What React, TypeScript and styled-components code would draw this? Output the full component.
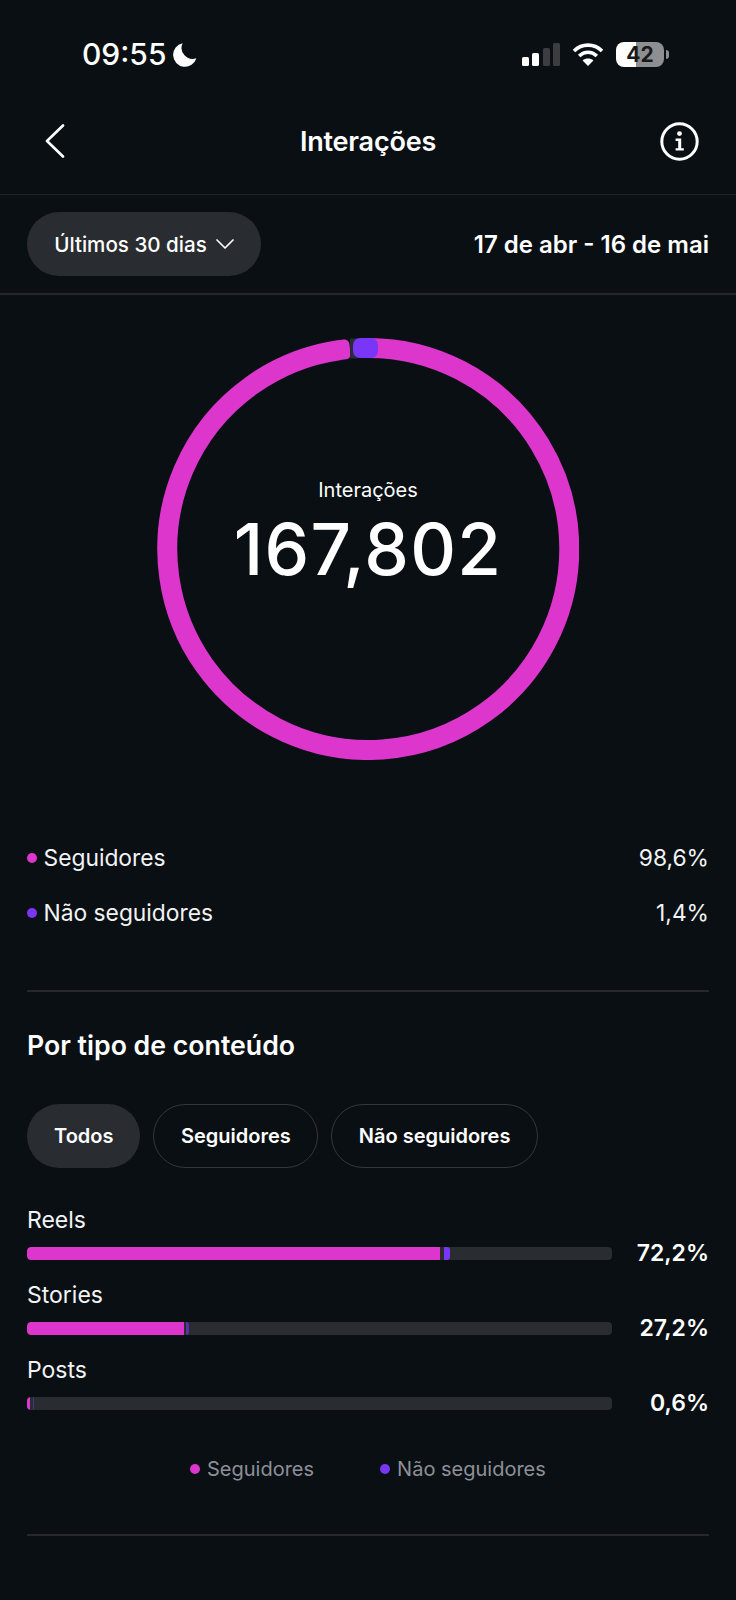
import React from "react";
import styled, { createGlobalStyle } from "styled-components";

const PINK = "#dd36cc";
const PURPLE = "#7a36f6";
const TRACK = "#292c31";
const BG = "#0a0f14";

const Global = createGlobalStyle`
  html, body { margin: 0; padding: 0; background: ${BG}; }
  * { box-sizing: border-box; }
`;

const Page = styled.div`
  width: 736px;
  height: 1600px;
  overflow: hidden;
  background: ${BG};
  color: #fff;
  font-family: Inter, "Liberation Sans", sans-serif;
`;

const StatusBar = styled.div`
  height: 88px;
  padding: 20px 72px 0 82px;
  display: flex;
  align-items: center;
`;
const Time = styled.span`
  font-size: 30px;
  font-weight: 500;
  letter-spacing: 0;
`;
const MoonIcon = styled.svg`
  margin-left: 6px;
  width: 25px;
  height: 25px;
`;
const StatusRight = styled.div`
  margin-left: auto;
  display: flex;
  align-items: center;
  gap: 12px;
`;
const Battery = styled.div`
  position: relative;
  width: 48px;
  height: 25px;
  border-radius: 8px;
  background: linear-gradient(90deg, #fff 42%, #8e8f91 42%);
  color: #17191d;
  font-size: 21px;
  font-weight: 700;
  display: flex;
  align-items: center;
  justify-content: center;
  &::after {
    content: "";
    position: absolute;
    right: -5px;
    top: 8px;
    width: 3px;
    height: 9px;
    border-radius: 0 3px 3px 0;
    background: #8e8f91;
  }
`;

const Header = styled.header`
  height: 107px;
  padding: 0 37px 0 45px;
  border-bottom: 1px solid #1f2227;
  display: flex;
  align-items: center;
`;
const HeaderSide = styled.div<{ $end?: boolean }>`
  flex: 1;
  display: flex;
  justify-content: ${(p) => (p.$end ? "flex-end" : "flex-start")};
`;
const Title = styled.h1`
  margin: 0 0 0 -8px;
  font-size: 27px;
  font-weight: 600;
  letter-spacing: -0.2px;
`;

const FilterRow = styled.div`
  height: 100px;
  padding: 0 27px;
  border-bottom: 2px solid #24272c;
  display: flex;
  align-items: center;
  justify-content: space-between;
`;
const RangePill = styled.div`
  width: 234px;
  height: 64px;
  border-radius: 32px;
  background: ${TRACK};
  display: flex;
  align-items: center;
  justify-content: center;
  gap: 9px;
  font-size: 20.6px;
  font-weight: 500;
`;
const DateRange = styled.span`
  font-size: 24px;
  font-weight: 600;
`;

const RingWrap = styled.div`
  margin: 43px auto 0;
  width: 422px;
  height: 422px;
  display: grid;
  place-items: center;
  > * {
    grid-area: 1 / 1;
  }
`;
const RingCenter = styled.div`
  text-align: center;
  margin-top: -30px;
`;
const RingLabel = styled.div`
  font-size: 20px;
  line-height: 24px;
`;
const RingValue = styled.div`
  font-size: 71px;
  line-height: 84px;
  font-weight: 500;
  letter-spacing: 1.2px;
  margin-top: 5px;
`;

const ShareList = styled.div`
  margin: 70px 27px 0;
  padding-bottom: 50px;
  border-bottom: 2px solid #24272c;
`;
const ShareRow = styled.div`
  height: 55px;
  display: flex;
  align-items: center;
  font-size: 22.8px;
  color: #f2f3f4;
`;
const Dot = styled.span<{ $color: string }>`
  width: 10px;
  height: 10px;
  border-radius: 50%;
  margin-right: 6.5px;
  background: ${(p) => p.$color};
`;
const ShareValue = styled.span`
  margin-left: auto;
`;

const SectionTitle = styled.h2`
  margin: 34px 27px 0;
  font-size: 26.7px;
  line-height: 38px;
  font-weight: 600;
`;
const Chips = styled.div`
  margin: 40px 27px 0;
  display: flex;
  gap: 13px;
`;
const Chip = styled.div<{ $active?: boolean }>`
  height: 64px;
  padding: 0 ${(p) => (p.$active ? "27px" : "26.5px")};
  border-radius: 32px;
  display: flex;
  align-items: center;
  font-size: 20px;
  font-weight: 600;
  background: ${(p) => (p.$active ? TRACK : "transparent")};
  border: ${(p) => (p.$active ? "none" : "1.5px solid #34373d")};
`;

const Rows = styled.div`
  margin: 33px 27px 0;
`;
const ContentRow = styled.div`
  height: 75px;
  display: grid;
  grid-template-columns: 585px 1fr;
  grid-template-rows: 38px 37px;
`;
const RowLabel = styled.div`
  grid-column: 1 / 3;
  font-size: 23px;
  line-height: 38px;
  color: #f2f3f4;
`;
const Track = styled.div`
  height: 13px;
  margin-top: 8px;
  border-radius: 4px;
  background: ${TRACK};
  display: flex;
  overflow: hidden;
`;
const Segment = styled.div<{ $color: string; $width: number; $gap: number; $opacity: number }>`
  width: ${(p) => p.$width}px;
  margin-left: ${(p) => p.$gap}px;
  height: 100%;
  background: ${(p) => p.$color};
  opacity: ${(p) => p.$opacity};
  border-radius: ${(p) => (p.$gap ? "0 3px 3px 0" : "4px 0 0 4px")};
`;
const Percent = styled.div`
  font-size: 23px;
  font-weight: 600;
  text-align: right;
  line-height: 29px;
`;

const KeyRow = styled.div`
  margin-top: 26px;
  padding-left: 190px;
  display: flex;
  gap: 66px;
  height: 34px;
  align-items: center;
`;
const KeyItem = styled.div`
  display: flex;
  align-items: center;
  font-size: 20px;
  color: #8e8f98;
`;
const KeyDot = styled(Dot)`
  margin-right: 7px;
`;
const BottomRule = styled.div`
  margin: 48px 27px 0;
  border-bottom: 2px solid #24272c;
`;

const rows = [
  { label: "Reels", pink: 413, gap: 3.5, purple: 6.5, dim: 1, value: "72,2%" },
  { label: "Stories", pink: 157, gap: 2, purple: 3, dim: 0.6, value: "27,2%" },
  { label: "Posts", pink: 3, gap: 3, purple: 1, dim: 0.4, value: "0,6%" },
];

export default function App() {
  return (
    <Page>
      <Global />
      <StatusBar>
        <Time>09:55</Time>
        <MoonIcon viewBox="0 0 24 24">
          <path d="M10.2 1.2A11.4 11.4 0 1 0 23.4 15.6 10.6 10.6 0 0 1 10.2 1.2Z" fill="#fff" />
        </MoonIcon>
        <StatusRight>
          <svg width="38" height="23" viewBox="0 0 38 23">
            <rect x="0" y="14" width="7" height="9" rx="1.6" fill="#fff" />
            <rect x="10" y="10" width="7" height="13" rx="1.6" fill="#fff" />
            <rect x="21" y="5" width="7" height="18" rx="1.6" fill="#3b3d41" />
            <rect x="31" y="0" width="7" height="23" rx="1.6" fill="#3b3d41" />
          </svg>
          <svg width="32" height="24" viewBox="0 0 32 24" fill="none" stroke="#fff" strokeWidth="3.6">
            <path d="M2 9C10 1.2 22 1.2 30 9" />
            <path d="M7.2 14C12.4 9 19.6 9 24.8 14" />
            <path d="M16 24l-5.4-5.6c3-2.6 7.8-2.6 10.8 0Z" fill="#fff" stroke="none" />
          </svg>
          <Battery>42</Battery>
        </StatusRight>
      </StatusBar>

      <Header>
        <HeaderSide>
          <svg width="20" height="34" viewBox="0 0 20 34" fill="none" stroke="#fff" strokeWidth="2.6" strokeLinecap="round" strokeLinejoin="round">
            <polyline points="18,1.5 2,17 18,32.5" />
          </svg>
        </HeaderSide>
        <Title>Interações</Title>
        <HeaderSide $end>
          <svg width="39" height="39" viewBox="0 0 39 39" fill="none">
            <circle cx="19.5" cy="19.5" r="17.7" stroke="#fff" strokeWidth="3" />
            <circle cx="19.5" cy="11.6" r="2.4" fill="#fff" />
            <path d="M15.6 16.6h5.6v9.6h2.6v2.3h-8.2v-2.3h2.6v-7.3h-2.6Z" fill="#fff" />
          </svg>
        </HeaderSide>
      </Header>

      <FilterRow>
        <RangePill>
          Últimos 30 dias
          <svg width="18" height="10" viewBox="0 0 18 10" fill="none" stroke="#fff" strokeWidth="1.7" strokeLinecap="round" strokeLinejoin="round">
            <polyline points="1,1 9,9 17,1" />
          </svg>
        </RangePill>
        <DateRange>17 de abr - 16 de mai</DateRange>
      </FilterRow>

      <RingWrap>
        <svg width="422" height="422" viewBox="0 0 422 422" fill="none">
          <path d="M211 10A201 201 0 1 1 183 12" stroke={PINK} strokeWidth="20" />
          <rect x="179" y="1.6" width="14" height="20" rx="5" fill={PINK} transform="rotate(-7 186 11.6)" />
          <rect x="193" y="0.5" width="8" height="20" fill={TRACK} />
          <rect x="196" y="0" width="25" height="20" rx="7" fill={PURPLE} />
        </svg>
        <RingCenter>
          <RingLabel>Interações</RingLabel>
          <RingValue>167,802</RingValue>
        </RingCenter>
      </RingWrap>

      <ShareList>
        <ShareRow>
          <Dot $color={PINK} />
          Seguidores
          <ShareValue>98,6%</ShareValue>
        </ShareRow>
        <ShareRow>
          <Dot $color={PURPLE} />
          Não seguidores
          <ShareValue>1,4%</ShareValue>
        </ShareRow>
      </ShareList>

      <SectionTitle>Por tipo de conteúdo</SectionTitle>
      <Chips>
        <Chip $active>Todos</Chip>
        <Chip>Seguidores</Chip>
        <Chip>Não seguidores</Chip>
      </Chips>

      <Rows>
        {rows.map((r) => (
          <ContentRow key={r.label}>
            <RowLabel>{r.label}</RowLabel>
            <Track>
              <Segment $color={PINK} $width={r.pink} $gap={0} $opacity={1} />
              <Segment $color={PURPLE} $width={r.purple} $gap={r.gap} $opacity={r.dim} />
            </Track>
            <Percent>{r.value}</Percent>
          </ContentRow>
        ))}
      </Rows>

      <KeyRow>
        <KeyItem>
          <KeyDot $color={PINK} />
          Seguidores
        </KeyItem>
        <KeyItem>
          <KeyDot $color={PURPLE} />
          Não seguidores
        </KeyItem>
      </KeyRow>
      <BottomRule />
    </Page>
  );
}
